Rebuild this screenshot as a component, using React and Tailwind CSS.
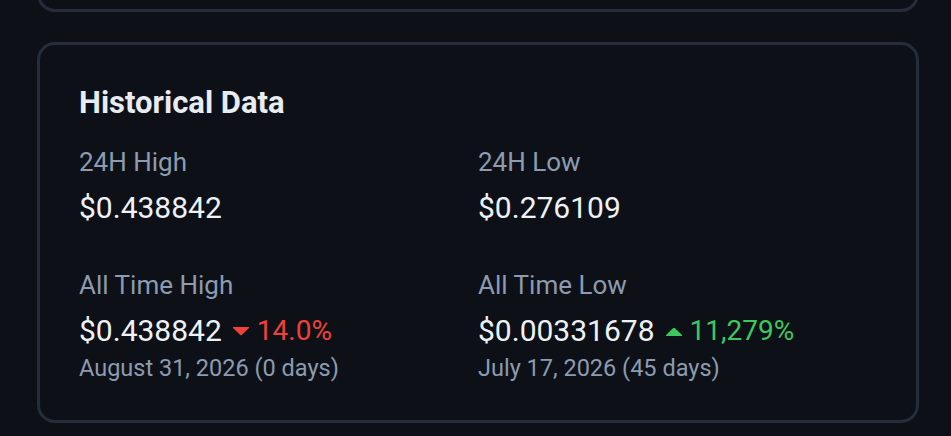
import React from 'react';

const Caret = ({ up, className }) => (
    <svg viewBox="0 0 18 9" className={className} fill="currentColor">
        {up ? (
            <path d="M8 1.2a1.4 1.4 0 0 1 2 0L17 8a.6.6 0 0 1-.4 1H1.4A.6.6 0 0 1 1 8z" />
        ) : (
            <path d="M8 7.8a1.4 1.4 0 0 0 2 0L17 1a.6.6 0 0 0-.4-1H1.4A.6.6 0 0 0 1 1z" />
        )}
    </svg>
);

const Stat = ({ label, value, change, up, date }) => (
    <div>
        <p className="text-[26px] leading-[32px] text-[#8c9bb0]">{label}</p>
        <div className="mt-[12px] flex items-center">
            <span className="text-[30px] leading-[36px] text-[#eef1f5]">{value}</span>
            {change && (
                <>
                    <Caret up={up} className={`ml-[10px] w-[18px] h-[9px] ${up ? 'text-[#3cc85c]' : 'text-[#ef4138]'}`} />
                    <span className={`ml-[7px] text-[28px] leading-[36px] ${up ? 'text-[#3cc85c]' : 'text-[#ef4138]'}`}>{change}</span>
                </>
            )}
        </div>
        {date && <p className="mt-[5px] text-[23.5px] leading-[28px] text-[#8c9bb0]">{date}</p>}
    </div>
);

const App = () => {
    return (
        <div className="w-[951px] h-[436px] overflow-hidden bg-[#0d1117] font-['Roboto',sans-serif]">
            <div className="ml-[37px] w-[882px]">
                {/* Previous card (cut off) */}
                <div className="-mt-[100px] h-[112px] rounded-[18px] border-[3px] border-[#242d39]" />

                {/* Historical Data */}
                <div className="mt-[30px] h-[381px] rounded-[18px] border-[3px] border-[#242d39] px-[39px] pt-[39px]">
                    <h2 className="text-[31px] leading-[37px] font-bold text-[#e8ecf1]">Historical Data</h2>
                    <div className="mt-[25px] grid grid-cols-2 gap-y-[43px]">
                        <Stat label="24H High" value="$0.438842" />
                        <Stat label="24H Low" value="$0.276109" />
                        <Stat
                            label="All Time High"
                            value="$0.438842"
                            change="14.0%"
                            date="August 31, 2026 (0 days)"
                        />
                        <Stat
                            label="All Time Low"
                            value="$0.00331678"
                            change="11,279%"
                            up
                            date="July 17, 2026 (45 days)"
                        />
                    </div>
                </div>
            </div>
        </div>
    );
};

export default App;
